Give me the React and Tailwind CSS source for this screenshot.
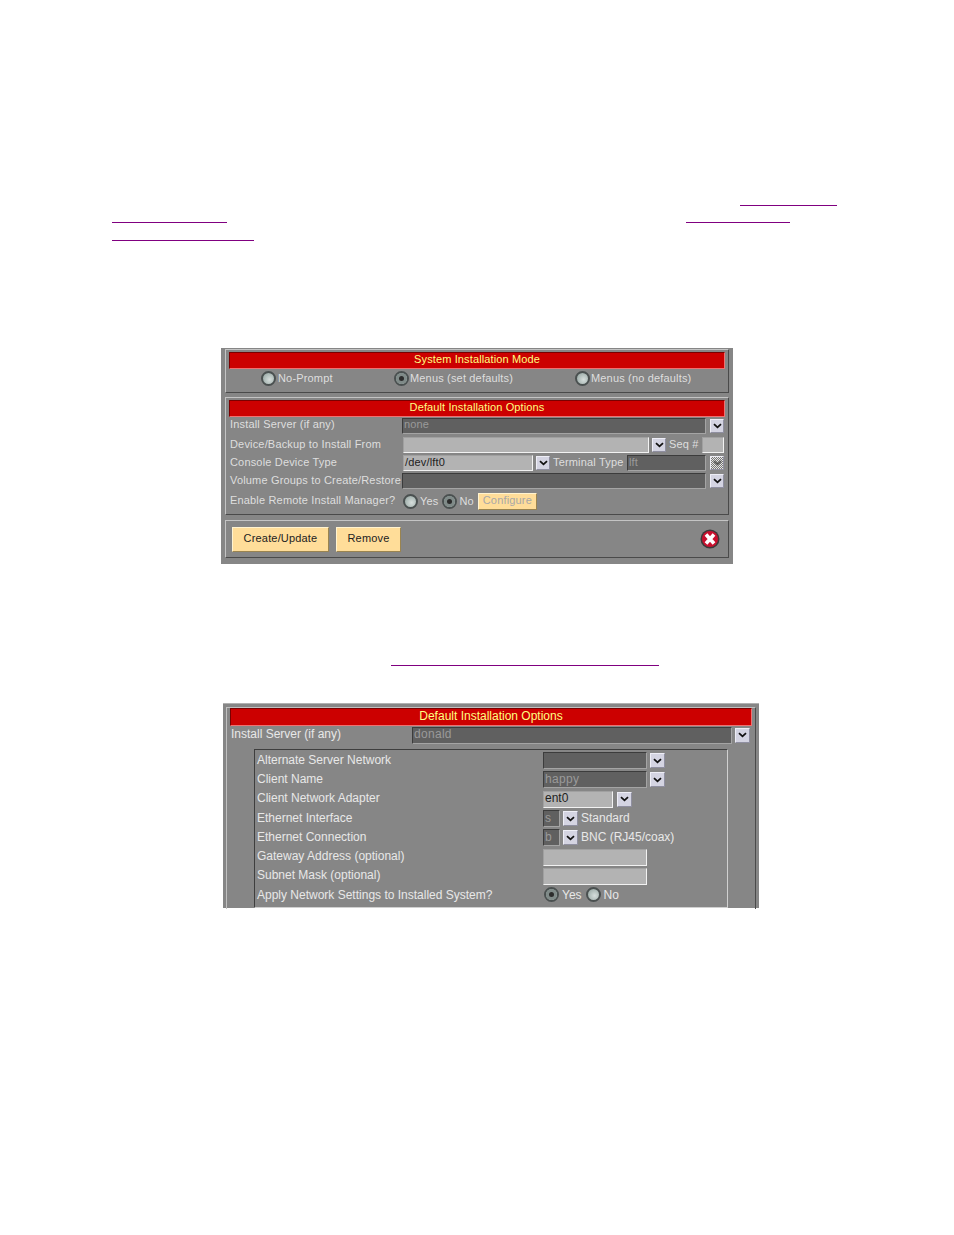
import React from "react";

const Chevron = ({ dim }) => (
  <svg width="9" height="6" viewBox="0 0 9 6" className="block">
    <path d="M1 1.2 L4.5 4.4 L8 1.2" fill="none" stroke={dim ? "#555" : "#111"} strokeWidth="1.8" />
  </svg>
);

const Drop = ({ className = "", hatched, big }) => (
  <div
    className={`${big ? "w-[15px] h-[15px]" : "w-[14px] h-[14px]"} shrink-0 flex items-center justify-center border border-t-[#eeeef6] border-l-[#eeeef6] border-b-[#8f8fa0] border-r-[#8f8fa0] ${hatched ? "bg-[repeating-conic-gradient(#777_0%_25%,#e6e6e6_0%_50%)] bg-[length:2px_2px]" : "bg-[#d4d4e2]"} ${className}`}
  >
    <Chevron dim={hatched} />
  </div>
);

const Field = ({ light, w, h = "h-[16px]", children, className = "" }) => (
  <div
    className={`${w} ${h} shrink-0 flex items-center px-[1px] pb-[2px] leading-none border overflow-hidden ${
      light
        ? "bg-[#b3b3b3] text-[#222] border-[#a0a0a0] border-b-[#f2f2f2] border-r-[#f2f2f2]"
        : "bg-[#606060] text-[#9a9a9a] border-t-[#3c3c3c] border-l-[#3c3c3c] border-b-[#a4a4a4] border-r-[#a4a4a4]"
    } ${className}`}
  >
    {children}
  </div>
);

const Radio = ({ on }) => (
  <div className="w-[15px] h-[15px] shrink-0 rounded-full border-2 border-[#4a5050] bg-[radial-gradient(circle_at_60%_60%,#d6dedc,#8fa09c)] flex items-center justify-center">
    {on && <div className="w-[11px] h-[11px] rounded-full bg-[#7f8a88] flex items-center justify-center"><div className="w-[5px] h-[5px] rounded-full bg-[#2c2c2c]" /></div>}
  </div>
);

const Opt = ({ on, label, gap = "gap-[2px]" }) => (
  <div className={`flex items-center ${gap}`}>
    <Radio on={on} />
    <span>{label}</span>
  </div>
);

const Bar = ({ children, h = "h-[17px]", text = "text-[11px] tracking-[0.12px]" }) => (
  <div className={`${h} ${text} pb-[2px] bg-[#cc0000] border border-t-[#7a0000] border-l-[#7a0000] border-b-[#f07070] border-r-[#f07070] text-[#ffff80] flex items-center justify-center`}>
    {children}
  </div>
);

const Box = ({ className = "", children }) => (
  <div className={`border border-t-[#c4c4c4] border-l-[#c4c4c4] border-b-[#4a4a4a] border-r-[#4a4a4a] ${className}`}>
    {children}
  </div>
);

const Row1 = ({ h, children, className = "" }) => (
  <div className={`${h} flex items-center ${className}`}>{children}</div>
);

const Label1 = ({ children, w = "w-[173px]" }) => (
  <span className={`${w} shrink-0 whitespace-nowrap pl-[1px] pb-[2px]`}>{children}</span>
);

const Btn = ({ w, children, dim, h = "h-[25px]" }) => (
  <div
    className={`${w} ${h} pb-[2px] flex items-center justify-center bg-[#ffdd99] border border-t-[#fff3d0] border-l-[#fff3d0] border-b-[#9a8450] border-r-[#9a8450] ${dim ? "text-[#a8a8a8]" : "text-[#222]"}`}
  >
    {children}
  </div>
);

const Row2 = ({ children, label, className = "" }) => (
  <div className="h-[19.3px] flex items-center">
    <span className="w-[288px] shrink-0 whitespace-nowrap pl-[2px] pb-[2px]">{label}</span>
    <div className={`flex items-center ${className}`}>{children}</div>
  </div>
);

const Panel1 = () => (
  <div className="w-[512px] h-[216px] ml-[221px] bg-[#868686] pt-[1px] px-[4px] font-['Liberation_Sans',sans-serif] text-[11px] tracking-[0.17px] text-[#dedede]">
    <Box className="h-[44px] px-[3px] pt-[2px]">
      <Bar>System Installation Mode</Bar>
      <div className="flex items-center h-[18px] pl-[32px]">
        <div className="w-[133px]"><Opt label="No-Prompt" /></div>
        <div className="w-[181px]"><Opt on label="Menus (set defaults)" gap="gap-[1px]" /></div>
        <Opt label="Menus (no defaults)" gap="gap-[1px]" />
      </div>
    </Box>
    <Box className="mt-[4px] h-[118px] pl-[3px] pr-[3px] pt-[2px]">
      <Bar>Default Installation Options</Bar>
      <Row1 h="h-[17px]">
        <Label1>Install Server (if any)</Label1>
        <Field w="w-[304px]" h="h-[16px]">none</Field>
        <Drop className="ml-[4px]" />
      </Row1>
      <Row1 h="h-[20px]" className="pt-[2px]">
        <Label1 w="w-[174px]">Device/Backup to Install From</Label1>
        <Field light w="w-[246px]" />
        <Drop className="ml-[3px]" />
        <span className="ml-[3px] w-[33px] whitespace-nowrap pb-[2px]">Seq #</span>
        <Field light w="w-[22px]" />
      </Row1>
      <Row1 h="h-[18px]">
        <Label1 w="w-[174px]">Console Device Type</Label1>
        <Field light w="w-[130px]">/dev/lft0</Field>
        <Drop className="ml-[3px]" />
        <span className="ml-[3px] w-[74px] whitespace-nowrap pb-[2px]">Terminal Type</span>
        <Field w="w-[79px]">lft</Field>
        <Drop hatched className="ml-[4px]" />
      </Row1>
      <Row1 h="h-[18px]">
        <Label1>Volume Groups to Create/Restore</Label1>
        <Field w="w-[304px]" />
        <Drop className="ml-[4px]" />
      </Row1>
      <Row1 h="h-[22px]">
        <Label1 w="w-[174px]">Enable Remote Install Manager?</Label1>
        <Opt label="Yes" />
        <div className="w-[4px]" />
        <Opt on label="No" />
        <div className="w-[4px]" />
        <Btn w="w-[59px]" h="h-[17px]" dim>Configure</Btn>
      </Row1>
    </Box>
    <Box className="mt-[5px] h-[38px] flex items-center pl-[6px] pr-[8px] text-[#222]">
      <Btn w="w-[97px]">Create/Update</Btn>
      <div className="w-[7px]" />
      <Btn w="w-[65px]">Remove</Btn>
      <svg width="20" height="20" viewBox="0 0 20 20" className="ml-auto">
        <circle cx="10" cy="10" r="9.5" fill="#3a3a3a" />
        <circle cx="10" cy="10" r="8" fill="#c8102e" />
        <path d="M6 5.5 L14 14.5 M14 5.5 L6 14.5" stroke="#fff" strokeWidth="3.6" />
      </svg>
    </Box>
  </div>
);

const Panel2 = () => (
  <div className="w-[536px] h-[205px] ml-[223px] bg-[#868686] border-t border-[#b0b0b0] pt-[3px] pl-[3px] pr-[3px] font-['Liberation_Sans',sans-serif] text-[12px] text-[#e8e8e8]">
    <div className="h-[202px] border-l border-r border-t border-t-[#c0c0c0] border-l-[#c0c0c0] border-r-[#4a4a4a] pl-[3px] pr-[3px]">
      <Bar h="h-[18px]" text="text-[12px]">Default Installation Options</Bar>
      <div className="h-[18px] flex items-center">
        <span className="w-[182px] shrink-0 pl-[1px] pb-[2px]">Install Server (if any)</span>
        <Field w="w-[320px]" h="h-[17px]" className="tracking-[0.3px]">donald</Field>
        <Drop big className="ml-[3px]" />
      </div>
      <div className="mt-[5px] ml-[24px] w-[474px] h-[159px] border border-t-[#3e3e3e] border-l-[#3e3e3e] border-b-[#d0d0d0] border-r-[#d0d0d0] pt-[1px]">
        <Row2 label="Alternate Server Network">
          <Field w="w-[104px]" h="h-[17px]" /><Drop big className="ml-[3px]" />
        </Row2>
        <Row2 label="Client Name">
          <Field w="w-[104px]" h="h-[17px]" className="tracking-[0.3px]">happy</Field><Drop big className="ml-[3px]" />
        </Row2>
        <Row2 label="Client Network Adapter">
          <Field light w="w-[70px]" h="h-[17px]">ent0</Field><Drop big className="ml-[4px]" />
        </Row2>
        <Row2 label="Ethernet Interface">
          <Field w="w-[17px]" h="h-[17px]">s</Field><Drop big className="ml-[3px]" />
          <span className="ml-[3px] pb-[2px]">Standard</span>
        </Row2>
        <Row2 label="Ethernet Connection">
          <Field w="w-[17px]" h="h-[17px]">b</Field><Drop big className="ml-[3px]" />
          <span className="ml-[3px] pb-[2px]">BNC (RJ45/coax)</span>
        </Row2>
        <Row2 label="Gateway Address (optional)">
          <Field light w="w-[104px]" h="h-[17px]" />
        </Row2>
        <Row2 label="Subnet Mask (optional)">
          <Field light w="w-[104px]" h="h-[17px]" />
        </Row2>
        <Row2 label="Apply Network Settings to Installed System?" className="pl-[1px] pb-[2px]">
          <Opt on label="Yes" gap="gap-[3px]" />
          <div className="w-[4px]" />
          <Opt label="No" gap="gap-[3px]" />
        </Row2>
      </div>
    </div>
  </div>
);

const Link = ({ w, className = "" }) => (
  <div className={`${w} h-[1px] bg-[#800080] ${className}`} />
);

export default function App() {
  return (
    <div className="w-[954px] h-[1235px] bg-white overflow-hidden pt-[205px]">
      <div className="flex justify-end pr-[117px]"><Link w="w-[97px]" /></div>
      <div className="flex mt-[16px] pl-[112px]">
        <Link w="w-[115px]" />
        <Link w="w-[104px]" className="ml-[459px]" />
      </div>
      <Link w="w-[142px]" className="ml-[112px] mt-[17px]" />
      <div className="mt-[107px]"><Panel1 /></div>
      <Link w="w-[268px]" className="ml-[391px] mt-[101px] bg-[#660066]" />
      <div className="mt-[37px]"><Panel2 /></div>
    </div>
  );
}
